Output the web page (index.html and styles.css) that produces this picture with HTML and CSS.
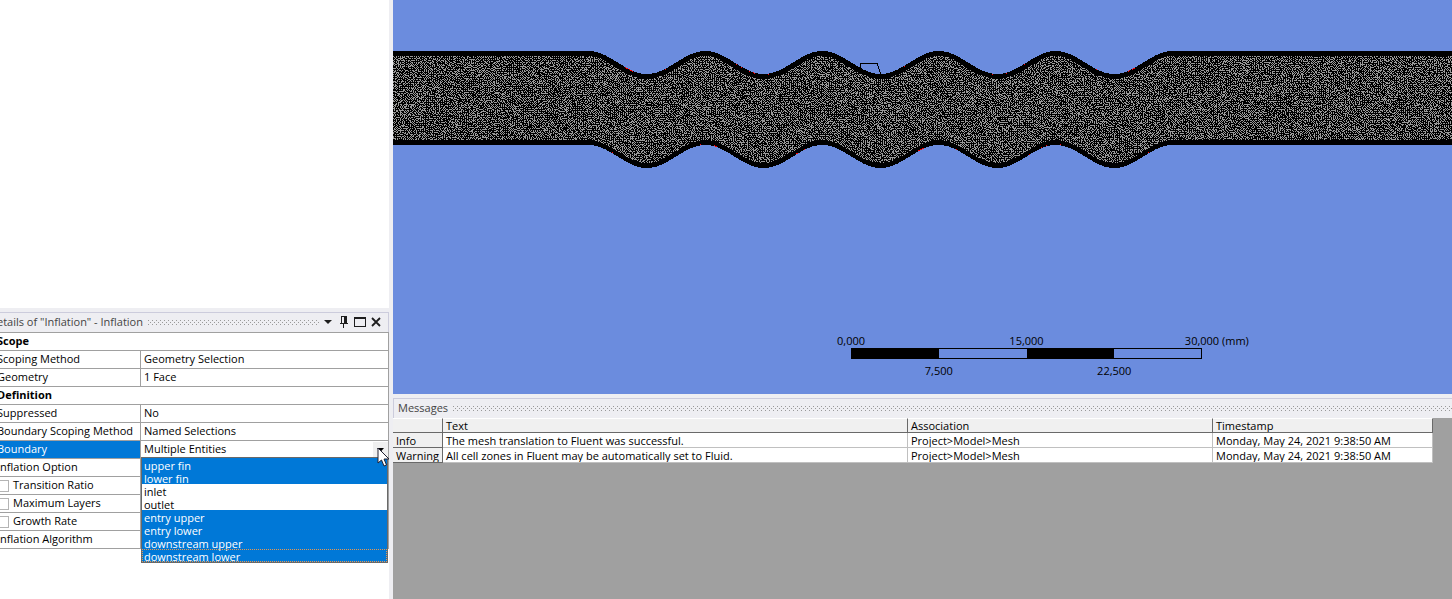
FILE: index.html
```html
<!DOCTYPE html>
<html lang="en">
<head>
<meta charset="utf-8">
<title>Mesh – Inflation</title>
<link rel="stylesheet" href="styles.css">
</head>
<body>
<div class="app">
  <aside class="sidebar">
    <div class="outline"></div>
    <section class="details">
      <header class="titlebar details-title">
        <h2>Details of "Inflation" - Inflation</h2>
        <span class="grip"></span>
        <button class="tool" type="button" aria-label="Panel menu"><svg width="10" height="12" viewBox="0 0 10 12"><path d="M1 4h8L5 8z" fill="#1e1e1e"/></svg></button>
        <button class="tool" type="button" aria-label="Pin"><svg width="10" height="12" viewBox="0 0 10 12" shape-rendering="crispEdges"><path d="M2 0h6v7h1v1H5v4H4V8H1V7h1zM3 1v6h2V1z" fill="#1e1e1e" fill-rule="evenodd"/></svg></button>
        <button class="tool" type="button" aria-label="Maximize"><svg width="12" height="12" viewBox="0 0 12 12" shape-rendering="crispEdges"><path d="M0 1h12v10H0zM1 3v7h10V3z" fill="#1e1e1e" fill-rule="evenodd"/></svg></button>
        <button class="tool" type="button" aria-label="Close"><svg width="10" height="12" viewBox="0 0 10 12"><path d="M1 2l8 8M9 2l-8 8" stroke="#1e1e1e" stroke-width="1.8"/></svg></button>
      </header>
      <table class="props">
        <colgroup><col class="c-name"><col></colgroup>
        <tr><th colspan="2">Scope</th></tr>
        <tr><td>Scoping Method</td><td>Geometry Selection</td></tr>
        <tr><td>Geometry</td><td>1 Face</td></tr>
        <tr><th colspan="2">Definition</th></tr>
        <tr><td>Suppressed</td><td>No</td></tr>
        <tr><td>Boundary Scoping Method</td><td>Named Selections</td></tr>
        <tr class="active"><td><label for="boundary">Boundary</label></td><td class="combo"><div class="combo-row"><span>Multiple Entities</span><button class="drop" type="button" aria-label="Open list"><svg width="7" height="4" viewBox="0 0 7 4"><path d="M0 0h7L3.500 4z"/></svg></button></div>
          <select class="list" id="boundary" multiple size="8">
            <option selected>upper fin</option>
            <option selected>lower fin</option>
            <option>inlet</option>
            <option>outlet</option>
            <option selected>entry upper</option>
            <option selected>entry lower</option>
            <option selected>downstream upper</option>
            <option selected class="current">downstream lower</option>
          </select>
          <svg class="cursor" width="13" height="20" viewBox="0 0 13 20"><path d="M1 1v15l3.500-3 2.500 6 2.500-1-2.500-6H12z" fill="#fff" stroke="#223" stroke-width="1"/></svg>
        </td></tr>
        <tr><td>Inflation Option</td><td></td></tr>
        <tr><td><label class="check"><input type="checkbox">Transition Ratio</label></td><td></td></tr>
        <tr><td><label class="check"><input type="checkbox">Maximum Layers</label></td><td></td></tr>
        <tr><td><label class="check"><input type="checkbox">Growth Rate</label></td><td></td></tr>
        <tr><td>Inflation Algorithm</td><td></td></tr>
      </table>
    </section>
  </aside>
  <main class="work">
    <section class="view">
      <canvas class="mesh" height="180"></canvas>
      <div class="scale">
        <div class="marks"><span>0,000</span><span>15,000</span><span>30,000<i>(mm)</i></span></div>
        <div class="bar"><b></b><b></b><b></b><b></b></div>
        <div class="marks lower"><span>7,500</span><span>22,500</span></div>
      </div>
    </section>
    <section class="messages">
      <header class="titlebar"><h2>Messages</h2><span class="grip"></span></header>
      <div class="log-area">
        <table class="log">
          <colgroup><col class="l-kind"><col class="l-text"><col class="l-assoc"><col class="l-time"></colgroup>
          <thead><tr><th></th><th>Text</th><th>Association</th><th>Timestamp</th></tr></thead>
          <tbody>
            <tr><th>Info</th><td>The mesh translation to Fluent was successful.</td><td>Project&gt;Model&gt;Mesh</td><td>Monday, May 24, 2021 9:38:50 AM</td></tr>
            <tr><th>Warning</th><td>All cell zones in Fluent may be automatically set to Fluid.</td><td>Project&gt;Model&gt;Mesh</td><td>Monday, May 24, 2021 9:38:50 AM</td></tr>
          </tbody>
        </table>
      </div>
    </section>
  </main>
</div>
<script src="mesh.js"></script>
</body>
</html>
```
FILE: styles.css
```css
* { box-sizing: border-box; }
body {
  margin: 0;
  background: #eeeef2;
  color: #000;
  font: 11px/14px "Open Sans", "Noto Sans", sans-serif;
}
h2 { margin: 0; font-size: 11px; font-weight: 400; line-height: 16px; color: #444; }
button { padding: 0; border: 0; background: none; font: inherit; }
svg { display: block; }
table { border-collapse: separate; border-spacing: 0; table-layout: fixed; }
th { text-align: left; }

.app { display: flex; gap: 4px; height: 100vh; overflow: hidden; }
.sidebar { display: flex; flex-direction: column; gap: 4px; width: 389px; flex: none; background: #eeeef2; overflow: hidden; }
.outline { flex: 1; background: #fff; }
.details { height: 287px; background: #fff; }

.titlebar { display: flex; align-items: center; height: 20px; padding: 0 0 1px 4px; border: 1px solid #ccccdc; border-width: 1px 0 0 1px; background: #eeeef2; white-space: nowrap; }
.grip {
  flex: 1;
  height: 5px;
  margin-left: 5px;
  background:
    conic-gradient(at 1px 1px, transparent 75%, #999 75%) 0 0 / 4px 4px,
    conic-gradient(at 1px 1px, transparent 75%, #999 75%) 2px 2px / 4px 4px;
}
.details-title { margin-left: -16px; padding-right: 4px; border-right-width: 1px; }
.tool { display: grid; place-items: center; width: 16px; height: 16px; }
.details-title .grip { margin-right: 1px; }

.props { width: 100%; border-top: 1px solid #a0a0a0; }
.c-name { width: 141px; }
.props td, .props th { height: 18px; padding: 0 0 0 3px; border: 1px solid #a0a0a0; border-width: 0 1px 1px 0; line-height: 15px; vertical-align: top; white-space: nowrap; }
.props td:first-child, .props th { padding: 0; text-indent: -3px; }
.props .active td:first-child { background: #0078d7; color: #fff; }
.check { display: flex; align-items: center; gap: 4px; text-indent: 0; }
.check input { appearance: none; width: 12px; height: 12px; margin: 2px 0 0 -3px; border: 1px solid #b4b4b4; background: #fff; }
.combo { position: relative; }
.combo-row { display: flex; justify-content: space-between; height: 17px; }
.drop { display: grid; place-items: center; width: 15px; height: 15px; margin-top: 1px; background: #f0f0f0; }
.list {
  position: absolute;
  z-index: 1;
  top: 16px;
  left: 0;
  width: 100%;
  height: 106px;
  padding: 0;
  overflow: hidden;
  border: 1px solid #696969;
  border-radius: 0;
  outline: 0;
  background: #fff;
  color: #000;
  font: inherit;
}
.list option { height: 13px; min-height: 13px; padding: 0 0 0 2px; line-height: 11px; }
.list option:checked { background: linear-gradient(#0078d7, #0078d7); color: #fff; }
.list .current { outline: 1px dotted #e89850; outline-offset: -1px; }
.cursor { position: absolute; z-index: 2; top: 6px; right: -2px; }

.work { display: flex; flex-direction: column; gap: 4px; flex: 1; min-width: 0; }
.view { display: flex; flex-direction: column; justify-content: space-between; flex: 1; min-height: 0; overflow: hidden; background: #6b8cde; }
.mesh { display: block; width: 100%; height: 180px; }
.scale { width: 351px; margin: 0 0 16px 458px; }
.marks { display: flex; justify-content: space-between; }
.marks span { position: relative; display: flex; justify-content: center; width: 0; white-space: nowrap; }
.marks i { position: absolute; left: 20px; font-style: normal; }
.lower { justify-content: space-around; padding-top: 5px; }
.bar { display: flex; height: 11px; border: 1px solid #000; }
.bar b { flex: 1; }
.bar b:nth-child(odd) { background: #000; }

.messages { display: flex; flex-direction: column; height: 201px; }
.log-area { flex: 1; background: #a0a0a0; }
.log { width: 1040px; background: #fff; }
.l-kind { width: 50px; }
.l-text { width: 465px; }
.l-assoc { width: 305px; }
.l-time { width: 220px; }
.log th, .log td { height: 15px; padding: 1px 0 0 3px; border: 1px solid #c0c0c0; border-width: 0 1px 1px 0; line-height: 13px; font-weight: 400; white-space: nowrap; overflow: hidden; }
.log th { border-color: #696969; background: #f0f0f0; }
.log thead th { padding-top: 0; border-top: 1px solid #fff; }
```
FILE: mesh.js
```js
const canvas = document.querySelector('.mesh');
const left = 393;
const width = canvas.clientWidth;
canvas.width = width;
const ctx = canvas.getContext('2d');

const START = 588, PERIOD = 116.8, WAVES = 5;

function offset(x) {
  const t = (x - START) / PERIOD;
  return t < 0 || t > WAVES ? 0 : 11.5 * (1 - Math.cos(2 * Math.PI * t));
}

let seed = 7;
function random() {
  seed = (seed * 1664525 + 1013904223) >>> 0;
  return seed / 4294967296;
}

// Channel outline with the fine triangular cells inside it
let previous = [];
for (let i = 0; i < width; i++) {
  const x = i + left;
  const d = offset(x);
  const slope = offset(x + 1) - d;
  const wall = 5 * Math.sqrt(1 + slope * slope);
  const top = Math.round(51 + d), bottom = Math.round(145 + d);
  const column = [];
  ctx.fillStyle = '#000';
  ctx.fillRect(i, top, 1, bottom - top);
  ctx.fillStyle = '#999';
  for (let y = Math.round(top + wall); y < bottom - wall; y++) {
    const rows = Math.cos(Math.PI * y) * Math.sin(x / 19 + 2 * Math.sin(y / 11));
    const cols = Math.cos(Math.PI * x) * Math.sin(y / 9 + 2 * Math.sin(x / 27));
    let p = 0.6 + 0.22 * rows + 0.26 * cols;
    if (column[y - 1]) p *= 0.5;
    if (previous[y]) p *= 0.55;
    if (random() < p) {
      column[y] = true;
      ctx.fillRect(i, y, 1, 1);
    }
  }
  previous = column;
}

// Boundary faces that show through at the walls
ctx.fillStyle = '#f00';
[[625, 3], [629, 4], [665, 1], [736, 1], [741, 1], [749, 1], [753, 2], [768, 1], [904, 1], [992, 1], [1006, 1], [1024, 1], [1096, 1], [1128, 2], [1132, 3]]
  .forEach(([x, w]) => { for (let k = 0; k < w; k++) ctx.fillRect(x + k - left, Math.round(51 + offset(x + k)), 1, 1); });
[[612, 1], [700, 1], [714, 3], [796, 2], [804, 1], [918, 6], [956, 1], [1029, 1], [1041, 1], [1046, 1], [1060, 1], [1148, 1]]
  .forEach(([x, w]) => { for (let k = 0; k < w; k++) ctx.fillRect(x + k - left, Math.round(144 + offset(x + k)), 1, 1); });

// Wireframe marker
ctx.fillStyle = '#000';
[[860, 63, 18, 1], [860, 63, 1, 6], [877, 64, 1, 2], [878, 66, 1, 3], [879, 69, 1, 3], [880, 72, 1, 3]]
  .forEach(([x, y, w, h]) => ctx.fillRect(x - left, y, w, h));
```
